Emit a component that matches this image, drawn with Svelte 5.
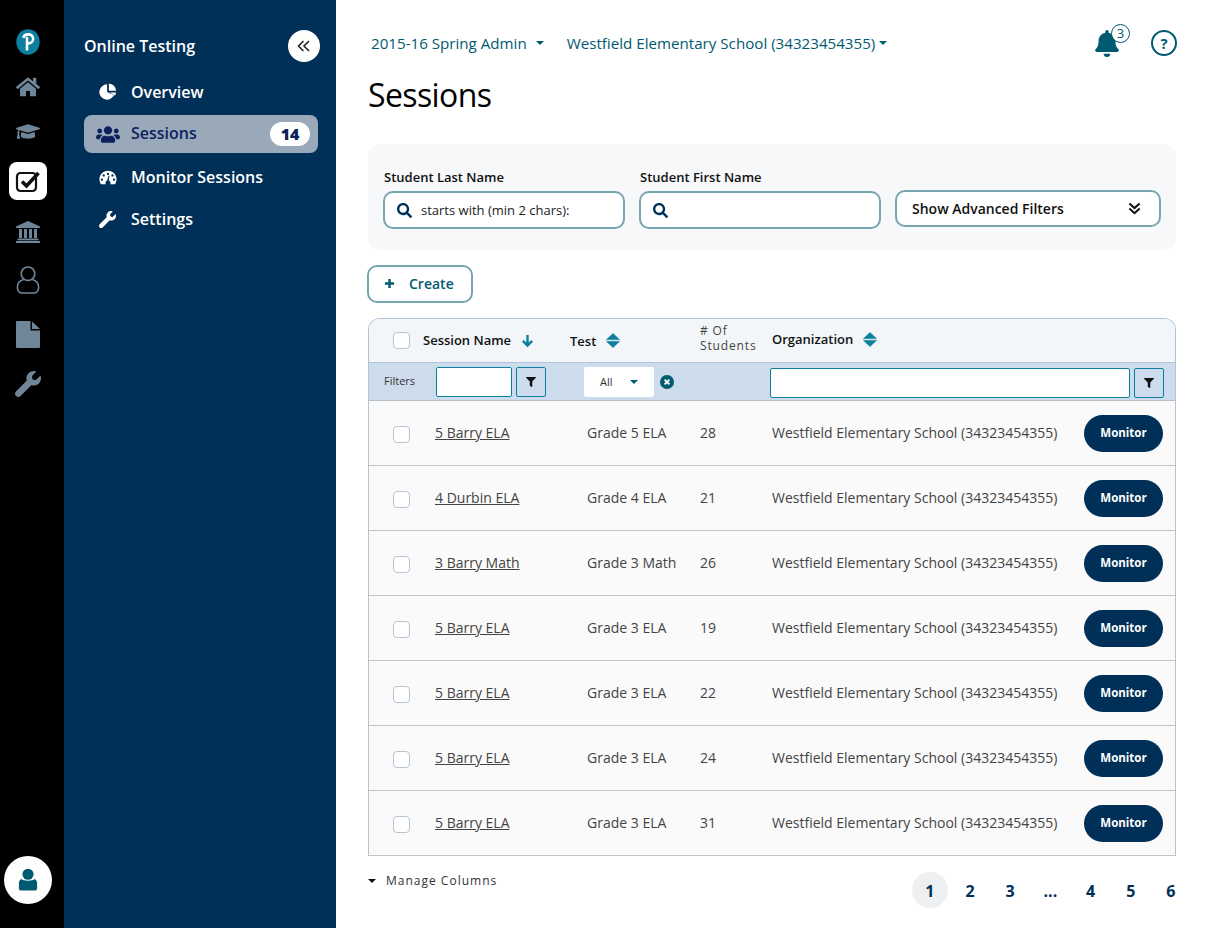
<script lang="ts">
  interface Row {
    name: string;
    test: string;
    count: number;
  }

  const school = 'Westfield Elementary School (34323454355)';

  const rows: Row[] = [
    { name: '5 Barry ELA', test: 'Grade 5 ELA', count: 28 },
    { name: '4 Durbin ELA', test: 'Grade 4 ELA', count: 21 },
    { name: '3 Barry Math', test: 'Grade 3 Math', count: 26 },
    { name: '5 Barry ELA', test: 'Grade 3 ELA', count: 19 },
    { name: '5 Barry ELA', test: 'Grade 3 ELA', count: 22 },
    { name: '5 Barry ELA', test: 'Grade 3 ELA', count: 24 },
    { name: '5 Barry ELA', test: 'Grade 3 ELA', count: 31 },
  ];

  const pages = ['1', '2', '3', '...', '4', '5', '6'];

  const searchPath =
    'M505 442.7L405.3 343c-4.5-4.5-10.6-7-17-7H372c27.6-35.3 44-79.7 44-128C416 93.1 322.9 0 208 0S0 93.1 0 208s93.1 208 208 208c48.3 0 92.7-16.4 128-44v16.3c0 6.4 2.5 12.5 7 17l99.7 99.7c9.4 9.4 24.6 9.4 33.9 0l28.3-28.3c9.4-9.4 9.4-24.6.1-34zM208 336c-70.7 0-128-57.2-128-128 0-70.7 57.2-128 128-128 70.7 0 128 57.2 128 128 0 70.7-57.2 128-128 128z';
  const filterPath =
    'M487.976 0H24.028C2.71 0-8.047 25.866 7.058 40.971L192 225.941V432c0 7.831 3.821 15.17 10.237 19.662l80 55.98C298.02 518.69 320 507.493 320 487.98V225.941l184.947-184.97C520.021 25.896 509.338 0 487.976 0z';
  const wrenchPath =
    'M507.73 109.1c-2.24-9.03-13.54-12.09-20.12-5.51l-74.36 74.36-67.88-11.31-11.31-67.88 74.36-74.36c6.62-6.62 3.43-17.9-5.66-20.16-47.38-11.74-99.55.91-136.58 37.93-39.64 39.64-50.55 97.1-34.05 147.2L18.74 402.76c-24.99 24.99-24.99 65.51 0 90.5 24.99 24.99 65.51 24.99 90.5 0l213.21-213.21c50.12 16.71 107.47 5.68 147.37-34.22 37.07-37.07 49.7-89.32 37.91-136.73z';
</script>

{#snippet sortIcon()}
  <svg class="sort" viewBox="0 0 14 15" aria-hidden="true">
    <path d="M7 0.5 L13.5 6.6 H0.5 Z M7 14.5 L13.5 8.4 H0.5 Z" />
  </svg>
{/snippet}

{#snippet filterBtn()}
  <button class="filter-btn" aria-label="Apply filter">
    <svg viewBox="0 0 512 512"><path d={filterPath} /></svg>
  </button>
{/snippet}

<div class="page">
  <aside class="rail">
    <div class="rail-icons">
      <div class="slot">
        <svg class="logo" viewBox="0 0 24 24" preserveAspectRatio="none" aria-hidden="true">
          <path fill="#0d7f9f" d="M12 0.3c6.6 0 11.7 5 11.7 11.6 0 6.6-5 11.8-11.7 11.8C5.4 23.7 0.3 18.5 0.3 12 0.3 5.3 5.4 0.3 12 0.3z" />
          <path fill="none" stroke="#fff" stroke-width="2.5" d="M7.2 8.2c0.6-2 2.7-3.2 5-3.2 2.9 0 4.9 1.6 4.9 4 0 2.6-2.1 4.2-4.7 4.2h-1.7M11 7.4v12.4" />
        </svg>
      </div>
      <div class="slot">
        <svg class="rail-ic home" viewBox="0 0 576 512" aria-hidden="true"><path d="M280.37 148.26L96 300.11V464a16 16 0 0 0 16 16l112.06-.29a16 16 0 0 0 15.92-16V368a16 16 0 0 1 16-16h64a16 16 0 0 1 16 16v95.64a16 16 0 0 0 16 16.05L464 480a16 16 0 0 0 16-16V300L295.67 148.26a12.19 12.19 0 0 0-15.3 0zM571.6 251.47L488 182.56V44.05a12 12 0 0 0-12-12h-56a12 12 0 0 0-12 12v72.61L318.47 43a48 48 0 0 0-61 0L4.34 251.47a12 12 0 0 0-1.6 16.9l25.5 31A12 12 0 0 0 45.15 301l235.22-193.74a12.19 12.19 0 0 1 15.3 0L530.9 301a12 12 0 0 0 16.9-1.6l25.5-31a12 12 0 0 0-1.7-16.93z" /></svg>
      </div>
      <div class="slot">
        <svg class="rail-ic" viewBox="0 0 640 512" aria-hidden="true"><path d="M622.34 153.2L343.4 67.5c-15.2-4.67-31.6-4.67-46.79 0L17.66 153.2c-23.54 7.23-23.54 38.36 0 45.59l48.63 14.94c-10.67 13.19-17.23 29.28-17.88 46.9C38.78 266.15 32 276.11 32 288c0 10.78 5.68 19.85 13.86 25.65L20.33 428.53C18.11 438.52 25.71 448 35.94 448h56.11c10.24 0 17.84-9.48 15.62-19.47L82.14 313.65C90.32 307.85 96 298.78 96 288c0-11.57-6.47-21.25-15.66-26.87.76-15.02 8.44-28.3 20.69-36.72L296.6 284.5c9.06 2.78 26.44 6.25 46.79 0l278.95-85.7c23.55-7.24 23.55-38.36 0-45.6zM352.79 315.09c-28.53 8.76-52.84 3.92-65.59 0l-145.02-44.55L128 384c0 35.35 85.96 64 192 64s192-28.65 192-64l-14.18-113.47-145.03 44.56z" /></svg>
      </div>
      <div class="slot">
        <div class="tile">
          <svg viewBox="0 0 26 26" aria-hidden="true">
            <rect x="2" y="5" width="19" height="18" rx="3.5" fill="none" stroke="#111" stroke-width="2.2" />
            <path d="M7 13.5 L11.5 18 L23.5 5" fill="none" stroke="#111" stroke-width="3.6" />
          </svg>
        </div>
      </div>
      <div class="slot">
        <svg class="rail-ic tall" viewBox="0 0 24 22" aria-hidden="true">
          <path d="M12 0 L24 5.4 V7 H0 V5.4 Z" />
          <rect x="3" y="8" width="3" height="9" />
          <rect x="8" y="8" width="3" height="9" />
          <rect x="13" y="8" width="3" height="9" />
          <rect x="18" y="8" width="3" height="9" />
          <rect x="1.5" y="17.5" width="21" height="1.8" />
          <rect x="0" y="20" width="24" height="2" />
        </svg>
      </div>
      <div class="slot">
        <svg class="person" viewBox="0 0 24 29" aria-hidden="true">
          <circle cx="12" cy="8" r="7" />
          <path d="M7.5 14 C3.5 15 1 18 1 22 C1 25.5 3 28 6 28 H18 C21 28 23 25.5 23 22 C23 18 20.5 15 16.5 14" />
        </svg>
      </div>
      <div class="slot">
        <svg class="doc" viewBox="0 0 24 27" aria-hidden="true">
          <path d="M1 0 H14.5 V9.5 H24 V26 a1 1 0 0 1 -1 1 H1 a1 1 0 0 1 -1 -1 V1 a1 1 0 0 1 1 -1z" />
          <path d="M16 0.5 L24 8 H16 Z" />
        </svg>
      </div>
      <div class="slot">
        <svg class="rail-ic wrench" viewBox="0 0 512 512" aria-hidden="true"><path d={wrenchPath} /></svg>
      </div>
    </div>
    <div class="avatar">
      <svg viewBox="0 0 20 24" aria-hidden="true">
        <circle cx="10" cy="6.5" r="5.8" />
        <path d="M3 11.6 C5 14 15 14 17 11.6 C18.6 12.4 19.5 14 19.5 16 V21 C19.5 22.6 18.5 23.5 17 23.5 H3 C1.5 23.5 0.5 22.6 0.5 21 V16 C0.5 14 1.4 12.4 3 11.6z" />
      </svg>
    </div>
  </aside>

  <nav class="side">
    <div class="side-head">
      <span>Online Testing</span>
      <button class="collapse" aria-label="Collapse menu">
        <svg viewBox="0 0 14 12"><path d="M6.5 1 L1.5 6 L6.5 11 M12 1 L7 6 L12 11" /></svg>
      </button>
    </div>
    <ul>
      <li class="item overview">
        <span class="ic">
          <svg viewBox="0 0 20 20" width="18" height="18" aria-hidden="true">
            <path d="M9 1.5 A8.5 8.5 0 1 0 16.6 13.6 L9 10z" />
            <path d="M11 0.5 A8.5 8.5 0 0 1 19 8.5 H11z" />
            <path d="M11.5 10.5 H19 A8.5 8.5 0 0 1 17.6 14z" />
          </svg>
        </span>
        Overview
      </li>
      <li class="item active">
        <span class="ic">
          <svg viewBox="0 0 640 512" width="24" height="19" aria-hidden="true"><path d="M96 224c35.3 0 64-28.7 64-64s-28.7-64-64-64-64 28.7-64 64 28.7 64 64 64zm448 0c35.3 0 64-28.7 64-64s-28.7-64-64-64-64 28.7-64 64 28.7 64 64 64zm32 32h-64c-17.6 0-33.5 7.1-45.1 18.6 40.3 22.1 68.9 62 75.1 109.4h66c17.7 0 32-14.3 32-32v-32c0-35.3-28.7-64-64-64zm-256 0c61.9 0 112-50.1 112-112S381.9 32 320 32 208 82.1 208 144s50.1 112 112 112zm76.8 32h-8.3c-20.8 10-43.9 16-68.5 16s-47.6-6-68.5-16h-8.3C179.6 288 128 339.6 128 403.2V432c0 26.5 21.5 48 48 48h288c26.5 0 48-21.5 48-48v-28.8c0-63.6-51.6-115.2-115.2-115.2zm-223.7-13.4C161.5 263.1 145.6 256 128 256H64c-35.3 0-64 28.7-64 64v32c0 17.7 14.3 32 32 32h65.9c6.3-47.4 34.9-87.3 75.2-109.4z" /></svg>
        </span>
        <span class="active-label">Sessions</span>
        <span class="badge">14</span>
      </li>
      <li class="item monitor">
        <span class="ic">
          <svg viewBox="0 0 20 16" width="18" height="15" aria-hidden="true">
            <path fill-rule="evenodd" d="M10 0.5 C4.8 0.5 0.5 4.7 0.5 10 C0.5 12 1.1 13.8 2 15.2 C2.2 15.5 2.5 15.5 2.8 15.5 H7.6 C7.3 15 7.2 14.5 7.2 14 C7.2 12.8 7.9 11.8 9 11.3 L10.6 6 C10.8 5.4 11.8 5.7 11.6 6.3 L10.9 11.2 C12 11.6 12.8 12.7 12.8 14 C12.8 14.5 12.7 15 12.4 15.5 H17.2 C17.5 15.5 17.8 15.5 18 15.2 C18.9 13.8 19.5 12 19.5 10 C19.5 4.7 15.2 0.5 10 0.5z M10 2.6 a1.3 1.3 0 1 1 0 2.6 a1.3 1.3 0 1 1 0-2.6z M5.2 4.4 a1.3 1.3 0 1 1 0 2.6 a1.3 1.3 0 1 1 0-2.6z M3.3 9 a1.3 1.3 0 1 1 0 2.6 a1.3 1.3 0 1 1 0-2.6z M15 4.4 a1.3 1.3 0 1 1 0 2.6 a1.3 1.3 0 1 1 0-2.6z M16.7 9 a1.3 1.3 0 1 1 0 2.6 a1.3 1.3 0 1 1 0-2.6z" />
          </svg>
        </span>
        Monitor Sessions
      </li>
      <li class="item settings">
        <span class="ic">
          <svg viewBox="0 0 512 512" width="17" height="17" aria-hidden="true"><path d={wrenchPath} /></svg>
        </span>
        Settings
      </li>
    </ul>
  </nav>

  <main class="main">
    <header class="top">
      <span class="ctx first">2015-16 Spring Admin<i class="caret"></i></span>
      <span class="ctx">{school}<i class="caret tight"></i></span>
      <div class="top-right">
        <span class="bell">
          <svg viewBox="0 0 448 512" width="24" height="27" aria-hidden="true"><path d="M224 512c35.32 0 63.97-28.65 63.97-64H160.03c0 35.35 28.65 64 63.97 64zm215.39-149.71c-19.32-20.76-55.47-51.99-55.47-154.29 0-77.7-54.48-139.9-127.94-155.16V32c0-17.67-14.32-32-31.98-32s-31.98 14.33-31.98 32v20.84C118.56 68.1 64.08 130.3 64.08 208c0 102.3-36.15 133.53-55.47 154.29-6 6.45-8.66 14.16-8.61 21.71.11 16.4 12.98 32 32.1 32h383.8c19.12 0 32-15.6 32.1-32 .05-7.55-2.61-15.27-8.61-21.71z" /></svg>
          <span class="bell-count">3</span>
        </span>
        <span class="help">?</span>
      </div>
    </header>

    <h1>Sessions</h1>

    <section class="filters">
      <label class="field">
        <span>Student Last Name</span>
        <div class="search">
          <svg viewBox="0 0 512 512" aria-hidden="true"><path d={searchPath} /></svg>
          <em>starts with (min 2 chars):</em>
        </div>
      </label>
      <label class="field">
        <span>Student First Name</span>
        <div class="search">
          <svg viewBox="0 0 512 512" aria-hidden="true"><path d={searchPath} /></svg>
        </div>
      </label>
      <button class="advanced">
        Show Advanced Filters
        <svg viewBox="0 0 14 14" aria-hidden="true"><path d="M1.5 1.5 L7 6.5 L12.5 1.5 M1.5 7 L7 12 L12.5 7" /></svg>
      </button>
    </section>

    <button class="create">
      <svg viewBox="0 0 12 12" aria-hidden="true"><path d="M6 1 V11 M1 6 H11" /></svg>
      Create
    </button>

    <div class="table">
      <div class="thead">
        <span class="check"></span>
        <span class="th th-name">
          Session Name
          <svg class="arrow" viewBox="0 0 14 14" aria-hidden="true"><path d="M7 1 V12 M2 7.5 L7 12.5 L12 7.5" /></svg>
        </span>
        <span class="th">Test {@render sortIcon()}</span>
        <span class="th-count"># Of<br />Students</span>
        <span class="th th-org">Organization {@render sortIcon()}</span>
      </div>

      <div class="tfilter">
        <span class="filter-label">Filters</span>
        <span class="fbox name-box"></span>
        {@render filterBtn()}
        <span class="select">All<i class="caret"></i></span>
        <svg class="clear" viewBox="0 0 14 14" aria-hidden="true">
          <circle cx="7" cy="7" r="7" />
          <path d="M4.6 4.6 L9.4 9.4 M9.4 4.6 L4.6 9.4" />
        </svg>
        <span class="fbox org-box"></span>
        {@render filterBtn()}
      </div>

      {#each rows as row}
        <div class="row">
          <span class="check"></span>
          <a href="#top" class="link cell">{row.name}</a>
          <span class="cell">{row.test}</span>
          <span class="cell">{row.count}</span>
          <span class="cell">{school}</span>
          <button class="monitor-btn">Monitor</button>
        </div>
      {/each}
    </div>

    <footer class="foot">
      <span class="manage"><i class="caret dark"></i>Manage Columns</span>
      <div class="pager">
        {#each pages as p, i}
          <span class="pg"><span class="num" class:current={i === 0}>{p}</span></span>
        {/each}
      </div>
    </footer>
  </main>
</div>

<style>
  :global(body) {
    margin: 0;
    background: #fff;
    font-family: 'Open Sans', 'Liberation Sans', sans-serif;
  }

  button {
    font-family: inherit;
    padding: 0;
    cursor: pointer;
  }

  .page {
    display: flex;
    width: 1208px;
    height: 928px;
    overflow: hidden;
  }

  /* far left icon rail */
  .rail {
    width: 64px;
    flex-shrink: 0;
    background: #000;
    display: flex;
    flex-direction: column;
    align-items: center;
    justify-content: space-between;
    padding: 20px 8px 24px 0;
    box-sizing: border-box;
  }

  .rail-icons {
    display: grid;
    grid-template-rows: 44px 46px 42px 58px 44px 52px 56px 44px;
    justify-items: center;
    width: 100%;
  }

  .slot {
    display: flex;
    align-items: center;
    justify-content: center;
  }

  .logo {
    width: 24px;
    height: 26px;
  }

  .rail-ic {
    width: 24px;
    height: 21px;
    fill: #6f8598;
  }

  .rail-ic.home {
    height: 22px;
  }

  .rail-ic.tall {
    height: 22px;
  }

  .rail-ic.wrench {
    width: 26px;
    height: 26px;
  }

  .person {
    width: 24px;
    height: 28px;
    fill: none;
    stroke: #6f8598;
    stroke-width: 1.7;
  }

  .doc {
    width: 24px;
    height: 27px;
    fill: #6f8598;
  }

  .tile {
    width: 38px;
    height: 38px;
    border-radius: 8px;
    background: #fff;
    display: flex;
    align-items: center;
    justify-content: center;
  }

  .tile svg {
    width: 26px;
    height: 26px;
  }

  .avatar {
    width: 48px;
    height: 48px;
    border-radius: 50%;
    background: #fff;
    display: flex;
    align-items: center;
    justify-content: center;
  }

  .avatar svg {
    width: 20px;
    height: 23px;
    margin-bottom: 2px;
    fill: #005a70;
  }

  /* second level nav */
  .side {
    width: 272px;
    flex-shrink: 0;
    background: #003057;
    color: #fff;
    padding: 30px 18px 0 20px;
    box-sizing: border-box;
  }

  .side-head {
    display: flex;
    align-items: center;
    justify-content: space-between;
    font-size: 16px;
    font-weight: 550;
    height: 32px;
    margin-right: -2px;
  }

  .collapse {
    width: 32px;
    height: 32px;
    border: none;
    border-radius: 50%;
    background: #fff;
    display: flex;
    align-items: center;
    justify-content: center;
  }

  .collapse svg {
    width: 14px;
    height: 12px;
    fill: none;
    stroke: #222;
    stroke-width: 1.6;
  }

  .side ul {
    list-style: none;
    margin: 0;
    padding: 0;
  }

  .item {
    display: flex;
    align-items: center;
    height: 38px;
    font-size: 16px;
    font-weight: 550;
    border-radius: 8px;
  }

  .item .ic {
    width: 47px;
    display: flex;
    justify-content: center;
    flex-shrink: 0;
    fill: #fff;
  }

  .item.overview {
    margin-top: 11px;
  }

  .item.active {
    margin-top: 4px;
    background: #99a9b9;
    color: #0e1f5e;
    padding-right: 8px;
  }

  .item.active .ic {
    fill: #0e1f5e;
  }

  .active-label {
    margin-bottom: 2px;
  }

  .item.monitor {
    margin-top: 5px;
  }

  .item.settings {
    margin-top: 4px;
  }

  .badge {
    margin-left: auto;
    width: 40px;
    height: 24px;
    border-radius: 12px;
    background: #fff;
    font-size: 16px;
    font-weight: 800;
    display: flex;
    align-items: center;
    justify-content: center;
  }

  /* content */
  .main {
    flex: 1;
    min-width: 0;
    padding: 0 32px;
    box-sizing: border-box;
  }

  .top {
    height: 86px;
    display: flex;
    align-items: center;
    color: #005a70;
    font-size: 15.15px;
    font-weight: 500;
    padding-left: 3px;
  }

  .ctx {
    display: flex;
    align-items: center;
    white-space: nowrap;
    margin-top: -1px;
  }

  .ctx.first {
    margin-right: 23px;
  }

  .caret {
    display: block;
    margin-left: 9px;
    border-style: solid;
    border-width: 4px 4px 0;
    border-color: #005a70 transparent transparent;
  }

  .caret.tight {
    margin-left: 4px;
  }

  .top-right {
    margin-left: auto;
    display: flex;
    align-items: center;
    gap: 32px;
    margin-right: -1px;
  }

  .bell {
    position: relative;
    display: block;
    height: 27px;
    fill: #005a70;
  }

  .bell-count {
    position: absolute;
    top: -6px;
    left: 16px;
    width: 19px;
    height: 19px;
    line-height: 17px;
    border-radius: 50%;
    border: 1px solid #005a70;
    background: #fff;
    box-sizing: border-box;
    text-align: center;
    font-size: 13px;
  }

  .help {
    width: 26px;
    height: 26px;
    border: 2px solid #005a70;
    border-radius: 50%;
    box-sizing: border-box;
    display: flex;
    align-items: center;
    justify-content: center;
    font-size: 15px;
    font-weight: 700;
  }

  h1 {
    margin: -9px 0 0;
    height: 67px;
    line-height: 36px;
    font-size: 32px;
    font-weight: 500;
    letter-spacing: -0.6px;
    color: #000;
  }

  .filters {
    background: #f6f8fa;
    border-radius: 12px;
    height: 106px;
    padding: 0 15px 21px;
    box-sizing: border-box;
    display: grid;
    grid-template-columns: 242px 242px 266px;
    gap: 14px;
    align-items: end;
  }

  .field {
    display: flex;
    flex-direction: column;
    gap: 5px;
    font-size: 13px;
    font-weight: 550;
    color: #111;
  }

  .field span {
    padding-left: 1px;
  }

  .search {
    height: 38px;
    background: #fff;
    border: 2px solid #77a5b0;
    border-radius: 10px;
    box-sizing: border-box;
    display: flex;
    align-items: center;
    padding-left: 12px;
    gap: 9px;
    fill: #003057;
  }

  .search svg {
    width: 15px;
    height: 15px;
    flex-shrink: 0;
  }

  .search em {
    font-style: normal;
    font-weight: 400;
    font-size: 13px;
    color: #222;
  }

  .advanced {
    height: 37px;
    margin-bottom: 2px;
    background: #fff;
    border: 2px solid #77a5b0;
    border-radius: 10px;
    display: flex;
    align-items: center;
    justify-content: space-between;
    padding: 0 18px 0 15px;
    font-size: 14px;
    font-weight: 550;
    color: #111;
  }

  .advanced svg {
    width: 13px;
    height: 13px;
    fill: none;
    stroke: #111;
    stroke-width: 2.2;
  }

  .create {
    display: flex;
    align-items: center;
    gap: 14px;
    margin: 15px 0 0 -1px;
    width: 106px;
    height: 38px;
    padding: 0 0 2px 15px;
    background: #fff;
    border: 2px solid #77a5b0;
    border-radius: 10px;
    color: #005a70;
    font-size: 14px;
    font-weight: 550;
  }

  .create svg {
    width: 11px;
    height: 11px;
    fill: none;
    stroke: #005a70;
    stroke-width: 2.6;
  }

  /* table */
  .table {
    margin-top: 15px;
    border: 1px solid #b3c4d8;
    border-bottom-color: #c4c4c4;
    border-radius: 12px 12px 0 0;
    overflow: hidden;
    font-size: 14px;
    color: #333;
  }

  .check {
    width: 17px;
    height: 17px;
    margin-left: 24px;
    border: 1px solid #b3c4d8;
    border-radius: 4px;
    background: #fff;
    box-sizing: border-box;
  }

  .thead {
    display: grid;
    grid-template-columns: 54px 147px 130px 72px 1fr;
    align-items: center;
    height: 43px;
    background: #f3f6f8;
    border-bottom: 1px solid #b3c4d8;
    font-size: 13px;
    font-weight: 550;
    color: #111;
  }

  .th {
    display: flex;
    align-items: center;
    gap: 10px;
  }

  .th-name {
    margin-top: -1px;
  }

  .th-count {
    margin-top: -5px;
    font-size: 12px;
    font-weight: 400;
    line-height: 15px;
    letter-spacing: 0.85px;
    color: #444;
  }

  .th-org {
    margin-top: -3px;
  }

  .sort {
    width: 14px;
    height: 15px;
    fill: #0d7f9f;
    stroke: #0d7f9f;
    stroke-linejoin: round;
    stroke-width: 0.6;
  }

  .arrow {
    width: 13px;
    height: 13px;
    fill: none;
    stroke: #0d7f9f;
    stroke-width: 2.6;
  }

  .tfilter {
    display: flex;
    align-items: center;
    height: 37px;
    padding-left: 15px;
    background: #cddcec;
    border-bottom: 1px solid #b8bfc6;
    font-size: 11px;
    color: #333;
  }

  .filter-label {
    width: 52px;
    margin-bottom: 2px;
  }

  .fbox {
    height: 30px;
    background: #fff;
    border: 1px solid #0d7f9f;
    border-radius: 2px;
    box-sizing: border-box;
  }

  .name-box {
    width: 76px;
  }

  .org-box {
    width: 360px;
    margin-left: 96px;
    margin-top: 2px;
  }

  .filter-btn {
    width: 30px;
    height: 30px;
    margin-left: 4px;
    background: #cddcec;
    border: 1px solid #0d7f9f;
    border-radius: 2px;
    display: flex;
    align-items: center;
    justify-content: center;
    fill: #111;
  }

  .filter-btn:last-child {
    margin-top: 2px;
  }

  .filter-btn svg {
    width: 10px;
    height: 10px;
  }

  .select {
    display: flex;
    align-items: center;
    justify-content: space-between;
    width: 70px;
    height: 30px;
    margin-left: 38px;
    padding: 0 16px;
    background: #fff;
    box-sizing: border-box;
    border-radius: 2px;
  }

  .clear {
    width: 14px;
    height: 14px;
    margin-left: 6px;
    fill: #005a70;
    stroke: #fff;
  }

  .clear path {
    stroke-width: 2;
  }

  .clear circle {
    stroke: none;
  }

  .row {
    display: grid;
    grid-template-columns: 66px 152px 113px 72px 1fr auto;
    align-items: center;
    height: 64px;
    background: #fafafa;
    border-bottom: 1px solid #c4c4c4;
    font-size: 14px;
    padding-right: 12px;
    color: #444;
  }

  .row:last-child {
    border-bottom: none;
  }

  .row .check {
    margin-top: 2px;
  }

  .cell {
    margin-bottom: 2px;
  }

  .link {
    color: #444;
  }

  .monitor-btn {
    width: 79px;
    height: 37px;
    padding-bottom: 2px;
    border: none;
    border-radius: 19px;
    background: #003057;
    color: #fff;
    font-size: 11.5px;
    font-weight: 700;
  }

  .foot {
    display: flex;
    justify-content: space-between;
    align-items: flex-start;
    margin-top: 16px;
  }

  .manage {
    display: flex;
    align-items: center;
    font-size: 12px;
    letter-spacing: 1px;
    color: #333;
  }

  .caret.dark {
    margin: 0 10px 0 0;
    border-color: #111 transparent transparent;
  }

  .pager {
    display: flex;
    align-items: center;
    margin-right: -15px;
  }

  .pg {
    width: 40.2px;
    height: 36px;
    display: flex;
    align-items: center;
    justify-content: center;
  }

  .num {
    width: 36px;
    height: 36px;
    padding-top: 2px;
    box-sizing: border-box;
    flex-shrink: 0;
    border-radius: 50%;
    display: flex;
    align-items: center;
    justify-content: center;
    font-size: 16px;
    font-weight: 700;
    color: #003057;
  }

  .num.current {
    background: #eeeff1;
  }
</style>
